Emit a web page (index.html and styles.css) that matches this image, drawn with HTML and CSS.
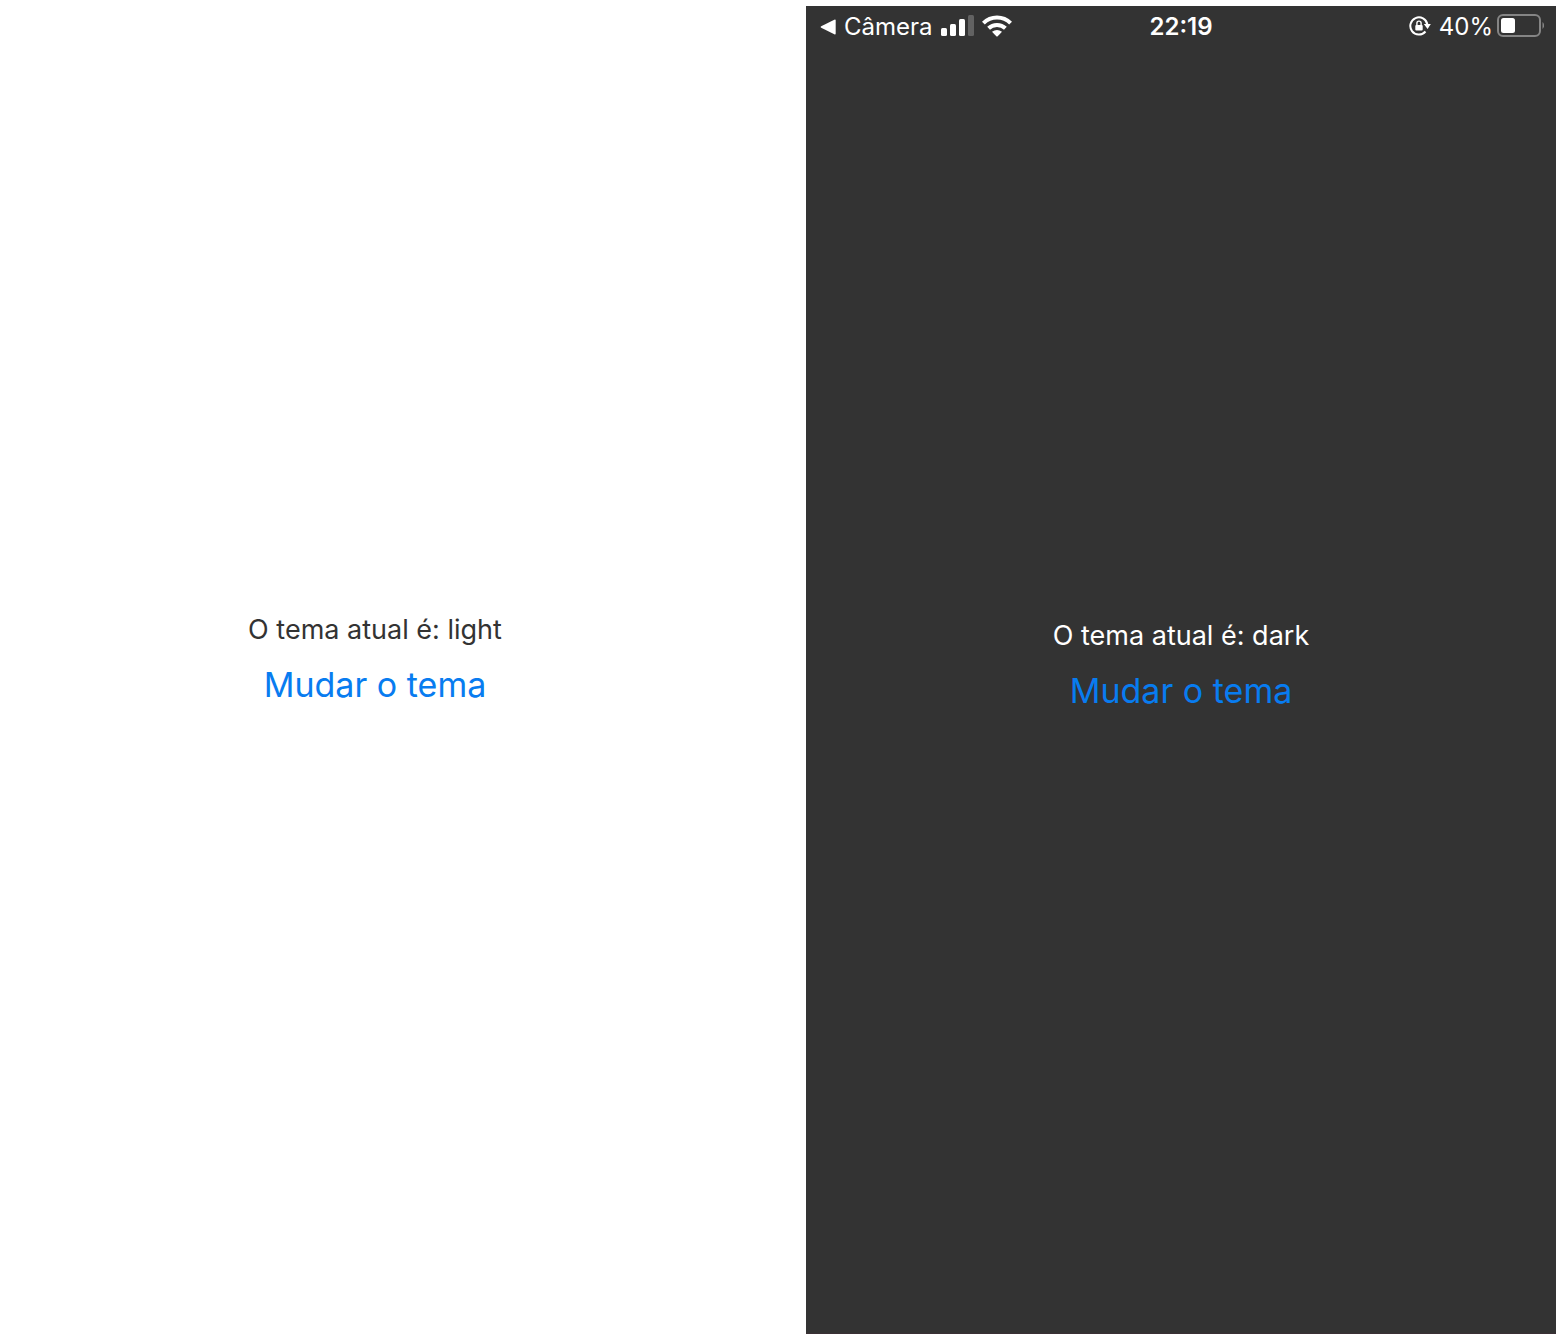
FILE: index.html
```html
<!DOCTYPE html>
<html lang="pt-BR">
<head>
<meta charset="utf-8">
<meta name="viewport" content="width=device-width, initial-scale=1">
<title>Tema</title>
<link rel="stylesheet" href="styles.css">
</head>
<body>
<main class="screens">
  <section class="screen screen-light">
    <div class="content">
      <p class="label">O tema atual é: light</p>
      <button class="toggle" type="button">Mudar o tema</button>
    </div>
  </section>
  <section class="screen screen-dark">
    <header class="status">
      <div class="status-left">
        <a class="back" href="#">
          <svg width="18" height="16" viewBox="-2 0 18 16" fill="currentColor" aria-hidden="true"><path d="M1.2 7.2 14.3.8Q15.700.2 15.700 1.600v12.800q0 1.400-1.400.8L1.200 8.800Q-.2 8 1.200 7.200z"/></svg>
          <span>Câmera</span>
        </a>
        <svg width="33" height="22" viewBox="0 0 33 22" fill="currentColor" aria-hidden="true">
          <rect x="0" y="13" width="6" height="8" rx="1.500"/>
          <rect x="9" y="9" width="6" height="12" rx="1.500"/>
          <rect x="18" y="4" width="6" height="17" rx="1.500"/>
          <rect x="27" y="0" width="6" height="21" rx="1.500" opacity=".23"/>
        </svg>
        <svg width="30" height="22" viewBox="0 0 30 22" aria-hidden="true">
          <g fill="none" stroke="currentColor" stroke-width="4">
            <path d="M1.400 8.200Q7 2.500 15 2.500T28.600 8.200"/>
            <path d="M6.600 13.300Q10 10 15 10T23.400 13.300"/>
          </g>
          <path fill="currentColor" d="M10 16.700Q15 13.300 20 16.700L15.700 21.200q-.7.6-1.400 0z"/>
        </svg>
      </div>
      <time class="clock">22:19</time>
      <div class="status-right">
        <svg class="lock" width="22" height="22" viewBox="0 0 22 22" aria-hidden="true">
          <path fill="none" stroke="currentColor" stroke-width="2" d="M18.400 9.500A8.600 8.600 0 1 0 16.500 16.500"/>
          <path fill="currentColor" d="M14.800 9h7l-3.200 5z"/>
          <rect x="6.300" y="10" width="7.400" height="5.500" rx="1" fill="currentColor"/>
          <path fill="none" stroke="currentColor" stroke-width="1.400" d="M7.900 10.500V8.200a2.100 2.100 0 0 1 4.200 0v2.300"/>
        </svg>
        <span>40%</span>
        <svg width="47" height="24" viewBox="0 0 47 24" aria-hidden="true">
          <rect x="1" y="1" width="42" height="21" rx="5" fill="none" stroke="#858585" stroke-width="2"/>
          <rect x="4" y="4" width="14" height="15" rx="2.500" fill="currentColor"/>
          <path d="M45.500 8q3.500 3.500 0 7z" fill="#858585"/>
        </svg>
      </div>
    </header>
    <div class="content">
      <p class="label">O tema atual é: dark</p>
      <button class="toggle" type="button">Mudar o tema</button>
    </div>
  </section>
</main>
</body>
</html>
```
FILE: styles.css
```css
* {
  box-sizing: border-box;
}

body {
  margin: 0;
  background: #fff;
  font-family: Inter, "Liberation Sans", sans-serif;
}

.screens {
  display: grid;
  grid-template-columns: 1fr 1fr;
  column-gap: 56px;
  min-height: 100vh;
  padding-right: 2px;
}

.screen {
  display: grid;
  grid-template-areas: "stack";
}

.screen-light {
  margin-bottom: 6px;
  background: #fff;
  color: #333;
}

.screen-dark {
  margin-top: 6px;
  background: #333;
  border-bottom: 1px solid #3a3035;
  color: #fff;
}

.status {
  grid-area: stack;
  align-self: start;
  display: grid;
  grid-template-columns: 1fr auto 1fr;
  align-items: center;
  height: 42px;
  padding: 0 12px;
  font-size: 24px;
  line-height: 32px;
}

.status-left,
.status-right,
.back {
  display: flex;
  align-items: center;
}

.status-left {
  gap: 8px;
}

.status-right {
  justify-content: flex-end;
  gap: 4px;
}

.status-left > svg,
.status-right > svg {
  margin-bottom: 2px;
}

.lock {
  margin-right: 4px;
}

.back {
  gap: 8px;
  color: inherit;
  text-decoration: none;
}

.clock {
  font-weight: 600;
}

.content {
  grid-area: stack;
  display: flex;
  flex-direction: column;
  align-items: center;
  justify-content: center;
  padding-top: 8px;
}

.label {
  margin: 0;
  font-size: 27px;
  line-height: 34px;
}

.toggle {
  position: relative;
  z-index: 1;
  padding: 16px;
  border: 0;
  background: none;
  color: #087cf0;
  font-family: inherit;
  font-size: 34px;
  line-height: 44px;
  cursor: pointer;
}
```
